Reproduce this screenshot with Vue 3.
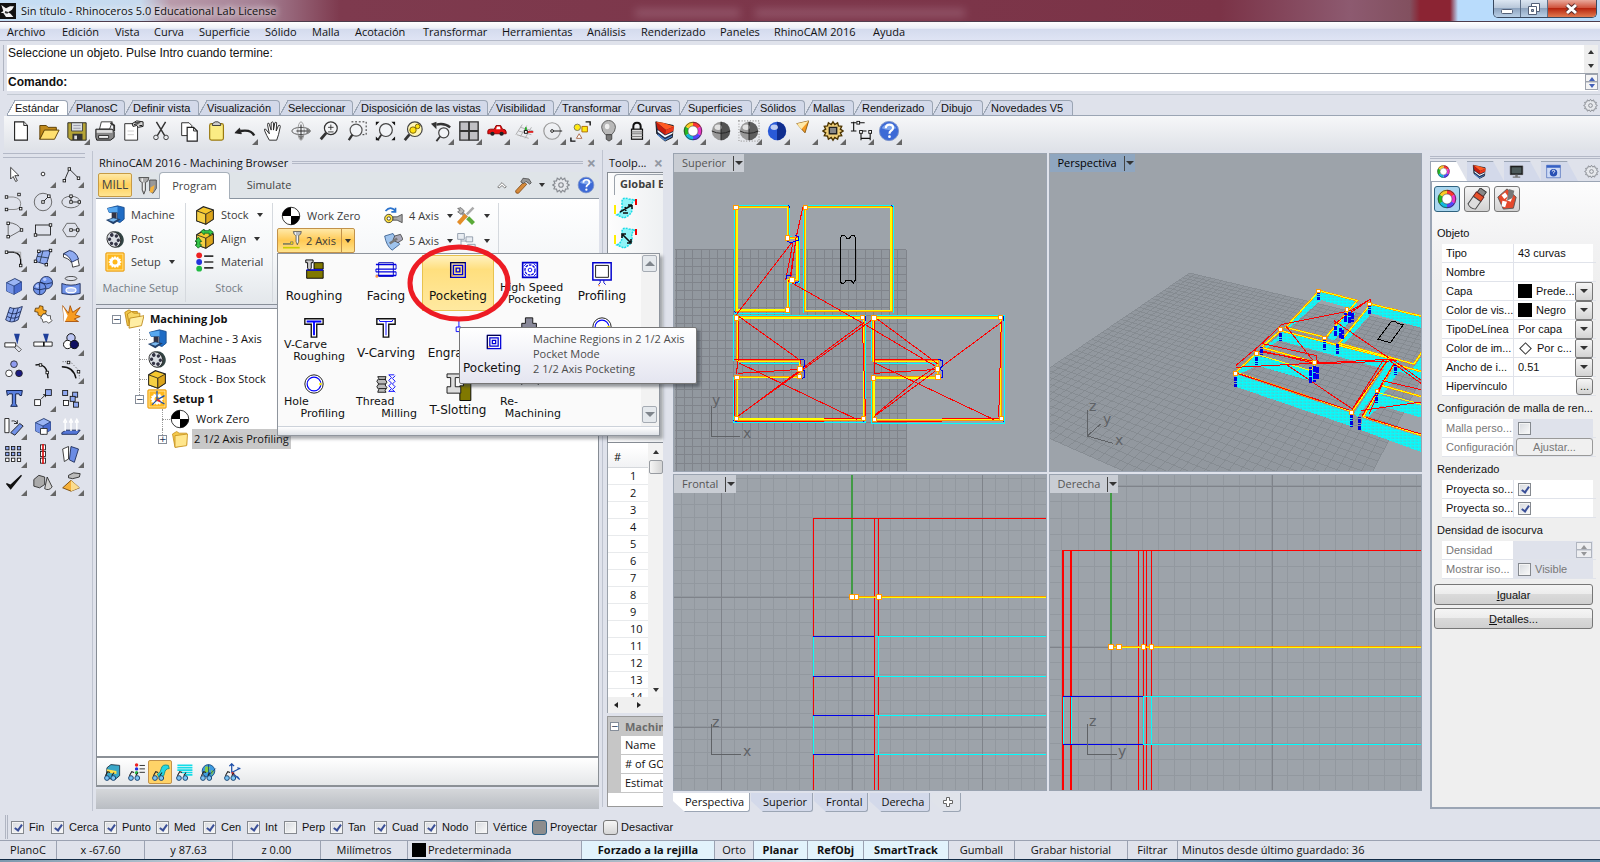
<script setup>
const menus = [
  ['Archivo', 55], ['Edición', 53], ['Vista', 39], ['Curva', 45], ['Superficie', 66], ['Sólido', 47], ['Malla', 43],
  ['Acotación', 68], ['Transformar', 79], ['Herramientas', 85], ['Análisis', 54], ['Renderizado', 79],
  ['Paneles', 54], ['RhinoCAM 2016', 99], ['Ayuda', 50]
]
const toolTabs = [
  ['Estándar', 61], ['PlanosC', 57], ['Definir vista', 74], ['Visualización', 81], ['Seleccionar', 73],
  ['Disposición de las vistas', 135], ['Visibilidad', 66], ['Transformar', 75], ['Curvas', 51], ['Superficies', 72],
  ['Sólidos', 53], ['Mallas', 49], ['Renderizado', 79], ['Dibujo', 50], ['Novedades V5', 90]
]

const lens = '<circle cx="14" cy="9" r="7" fill="#f4f5f7" stroke="#333" stroke-width="1.3"/><path d="M9 14L3 21" stroke="#333" stroke-width="3"/>'
const sphere = (c, d) => `<circle cx="12" cy="12" r="10" fill="${c}"/><path d="M12 2a10 10 0 0 1 0 20z" fill="${d}" opacity=".7"/><ellipse cx="9" cy="8" rx="4" ry="3" fill="#fff" opacity=".7"/>`
const wheel = '<g fill="none" stroke-width="5"><path d="M12 4.500A7.500 7.500 0 0 1 18.500 8.200" stroke="#f33"/><path d="M18.500 8.200A7.500 7.500 0 0 1 18.500 15.800" stroke="#e3c"/><path d="M18.500 15.800A7.500 7.500 0 0 1 12 19.500" stroke="#54f"/><path d="M12 19.500A7.500 7.500 0 0 1 5.500 15.800" stroke="#1bd"/><path d="M5.500 15.800A7.500 7.500 0 0 1 5.500 8.200" stroke="#2b2"/><path d="M5.500 8.200A7.500 7.500 0 0 1 12 4.500" stroke="#fc2"/></g><circle cx="12" cy="12" r="9.500" fill="none" stroke="#333" stroke-width=".8"/><circle cx="12" cy="12" r="5.500" fill="#fff" stroke="#555" stroke-width=".7"/>'
const layers = '<path d="M2 2l19 4-1 13-8 4-9-8z" fill="#1c2c50" stroke="#111"/><path d="M2 2l8 1 12 4-9 4z" fill="#ff5a22"/><path d="M2 2l11 9-1 5-8-6z" fill="#c81c0c"/><path d="M13 11l9-4-1 5-9 4z" fill="#f0381a"/><path d="M4 11l8 6 9-4-1 2-8 4-8-6z" fill="#fff"/><path d="M4 15l8 6 8-4v1l-8 5-8-6z" fill="#4f86cc"/>'
const doc = '<path d="M5 2h10l4 4v16H5z" fill="#fff" stroke="#222" stroke-width="1.2"/><path d="M15 2v4h4" fill="#ddd" stroke="#222"/>'
const dot = (x, y) => `<rect x="${x - 1.5}" y="${y - 1.5}" width="3" height="3" fill="#fff" stroke="#111"/>`
const gearPath = 'M12 2l2 3 3-2 1 3.500 3.500.5-1.500 3 3 2-3 2 1.500 3-3.500.500-1 3.500-3-2-2 3-2-3-3 2-1-3.500-3.500-.500 1.500-3-3-2 3-2-1.500-3L6 6.500 7 3l3 2z'
const cube = (a, b, c) => `<path d="M3 8l10-5 8 4v10l-9 5-9-4z" fill="${a}" stroke="#122a60"/><path d="M3 8l9 4v10l-9-4z" fill="${b}"/><path d="M12 12l9-5v10l-9 5z" fill="${c}"/><path d="M3 8l9 4 9-5M12 12v10" fill="none" stroke="#122a60" stroke-width=".8"/>`
const blue = (d) => `<path d="${d}" fill="#8eaaf0" stroke="#14234f"/>`
const square = (x, y, f = '#fff', s = 5) => `<rect x="${x}" y="${y}" width="${s}" height="${s}" fill="${f}" stroke="#111"/>`
const film = '<g transform="rotate(-25 12 12)"><ellipse cx="13" cy="13" rx="9" ry="10" fill="#344"/><ellipse cx="10.500" cy="12" rx="8" ry="9.500" fill="#d9dde2" stroke="#222"/><g fill="#334"><circle cx="10.500" cy="6" r="2.200"/><circle cx="15" cy="9.500" r="2"/><circle cx="15" cy="15" r="2"/><circle cx="10.500" cy="18" r="2.200"/><circle cx="6" cy="9.500" r="2"/><circle cx="6" cy="15" r="2"/></g></g>'
const zero = '<circle cx="12" cy="12" r="10.500" fill="#fff" stroke="#111"/><path d="M12 12V1.500A10.500 10.500 0 0 0 1.500 12zM12 12v10.500a10.500 10.500 0 0 0 10.500-10.500z" fill="#000"/>'
const machine = '<path d="M3 4l12-3 8 2v14l-5 4-3-1V9H5z" fill="#1f6cc4" stroke="#174a8a"/><path d="M3 4l12-2v7H5z" fill="#57a8f0"/><path d="M8 9h6v6l-3 3-3-3z" fill="#334"/><path d="M1 18l9-3 9 2-9 6z" fill="#22406c"/><path d="M4 18l6-2 5 1-5 3z" fill="#7ab8ee"/>'
const stock = '<path d="M2 7l8-5 12 4v11l-9 6-11-4z" fill="#f6c82e" stroke="#222" stroke-width="1.300"/><path d="M2 7l11 4v12l-11-4z" fill="#f6d044" stroke="#222"/><path d="M13 11l9-5v11l-9 6z" fill="#dda51a" stroke="#222"/>'
const setup = `<rect x="1" y="1" width="22" height="22" rx="1" fill="#ffb81c" stroke="#e69300"/><rect x="2.500" y="2.500" width="19" height="19" fill="none" stroke="#ffe6a0"/><g transform="translate(3 3) scale(.75)"><path d="${gearPath}" fill="#fff"/><circle cx="12" cy="12" r="4" fill="#ffb81c"/></g>`
const material = '<g stroke="#333" stroke-width="2"><path d="M11 5h11M11 12h11M11 19h11"/></g><circle cx="5" cy="4" r="3.500" fill="#e22"/><circle cx="5" cy="12" r="3.500" fill="#23d"/><circle cx="5" cy="20" r="3.500" fill="#2b4"/>'
const folder = '<path d="M3 6l5-3 3 2h9v14l-14 3z" fill="#f3c84b" stroke="#c89320"/><path d="M6 8l15-2-1 14-14 2z" fill="#ffe68c" stroke="#c89320"/>'
const folders = '<path d="M1 4l5-3 3 2h7v15l-12 2z" fill="#f3c84b" stroke="#b98414"/><path d="M4 6l5-3 3 2h7v14l-12 3z" fill="#f8d768" stroke="#b98414"/><path d="M6 23l1-12 17-3-3 12z" fill="#ffeea4" stroke="#b98414"/>'
const help = '<circle cx="12" cy="12" r="10.500" fill="#3d6ad6" stroke="#7c93c8"/><path d="M4 9a9 8 0 0 1 16 0q-8 4-16 0z" fill="#8fb4f4" opacity=".8"/><path d="M8.500 9q0-4 4-4t4 3.500q0 2-2.500 3.500-1.500 1-1.500 3" fill="none" stroke="#fff" stroke-width="2.300"/><circle cx="12.500" cy="18.200" r="1.500" fill="#fff"/>'
const glasses = '<g fill="#7bc4f4" stroke="#16406e" stroke-width="1.200"><circle cx="5" cy="19" r="3"/><circle cx="13" cy="19" r="3"/></g><path d="M3 16l3-5 3 1M11 16l3-4" fill="none" stroke="#222" stroke-width="1.300"/>'
const mill = '<path d="M8 2h12l-1 4-3 2v9l-2 5-2-5V8L9 6z" fill="#b7bcc2" stroke="#444"/><path d="M11 3v4M14 8v11" stroke="#fff" stroke-width="1.500"/>'

const I = {
  new: doc,
  open: '<path d="M2 6h7l2 2h9v4H7l-5 9z" fill="#c08a1c" stroke="#5a3c00"/><path d="M2 21l5-10h16l-5 10z" fill="#ffe070" stroke="#5a3c00"/>',
  save: '<path d="M2 3h20v19H5l-3-3z" fill="#b5a436" stroke="#222"/><path d="M6 3h12v9H6z" fill="#d9dde2" stroke="#444"/><path d="M8 6h8M8 9h8" stroke="#99a"/><path d="M7 15h11v7H7z" fill="#333"/><path d="M9 17h3v4H9z" fill="#ddd"/>',
  print: '<path d="M8 2h12l-3 8H6z" fill="#fff" stroke="#333"/><path d="M2 10h18l2 3v6l-4 3H3l-1-3z" fill="#888" stroke="#111"/><path d="M3 11h17v3H3z" fill="#ddd"/><path d="M5 17h11v3H5z" fill="#fff" stroke="#222"/><path d="M18 3l4 3v6" stroke="#333" fill="none" stroke-width="2"/>',
  props: '<path d="M3 4h11l3 3v15H3z" fill="#fff" stroke="#222"/><path d="M11 4l5-3 7 1v5l-5 1-2-2-4 1z" fill="#d6d6d6" stroke="#111"/><path d="M13 5l5-1M14 3l6 0M19 6l3 0" stroke="#111"/><path d="M6 12h7M6 16h7" stroke="#ccc"/>',
  cut: '<path d="M7 2l9 15M17 2L8 17" stroke="#333" stroke-width="1.600"/><circle cx="6.500" cy="19" r="2.500" fill="none" stroke="#333"/><circle cx="17.500" cy="19" r="2.500" fill="none" stroke="#333"/>',
  copy: '<path d="M4 3h8l3 3v11H4z" fill="#fff" stroke="#222"/><path d="M10 8h7l4 4v11H10z" fill="#fff" stroke="#222" stroke-width="1.300"/><path d="M17 8v4h4" fill="none" stroke="#222"/>',
  paste: '<rect x="4" y="4" width="15" height="18" rx="2" fill="#fbec84" stroke="#9a7a10" stroke-width="1.300"/><path d="M7 6V4l3-2h3l3 2v2z" fill="#ccc" stroke="#333"/>',
  undo: '<path d="M22 17q-3-7-15-5" fill="none" stroke="#222" stroke-width="2.600"/><path d="M1 14l5-5 2 6z" fill="#222" stroke="#222"/>',
  hand: '<path d="M8 22q-3-5-5-10-1-3 1-2l4 5-2-10q0-2 1.500-1.500L10 11V3q1-2 2.500 0v8l1.500-8q1.500-1.500 2 0l-.5 9 2.500-6q2-1 2 1l-2 9-2 6z" fill="#fff" stroke="#222"/>',
  rotate: '<ellipse cx="12" cy="12" rx="10" ry="4" fill="none" stroke="#555"/><ellipse cx="12" cy="12" rx="3.500" ry="10" fill="none" stroke="#999"/><path d="M12 5v12M7 12h12" stroke="#222"/><path d="M18 9l5 3-5 3zM9 17h6l-3 5z" fill="#777"/>',
  zoom: lens + '<path d="M11 8h6M14 5v6M11 13h6" stroke="#333"/>',
  zoomwin: '<path d="M6 2h16v14h-8" fill="none" stroke="#222" stroke-dasharray="2 2"/><circle cx="11" cy="11" r="6.500" fill="#f2f4f7" stroke="#555" stroke-width="1.300"/><path d="M7 16l-4 6" stroke="#333" stroke-width="2.500"/>',
  zoomext: '<circle cx="13" cy="11" r="7" fill="#f2f4f7" stroke="#444" stroke-width="1.300"/><path d="M8 16l-4 6" stroke="#333" stroke-width="2"/><path d="M2 6V2h4zM19 2h4v4zM23 18v4h-4zM2 18v4h4z" fill="#111"/>',
  zoomsel: '<circle cx="14" cy="10" r="8" fill="#fff6b8" stroke="#444" stroke-width="1.300"/><circle cx="12" cy="11" r="3.500" fill="#ffe112" stroke="#776000"/><circle cx="17" cy="7" r="2.500" fill="#ffe112" stroke="#776000"/><path d="M8 16l-5 6" stroke="#333" stroke-width="3"/>',
  undoview: '<path d="M22 8q-6-5-15-3" fill="none" stroke="#333" stroke-width="2.600"/><path d="M1 4l6-2 0 8z" fill="#333"/><circle cx="15" cy="14" r="5.500" fill="#f2f4f7" stroke="#444" stroke-width="1.300"/><path d="M11 18l-4 5" stroke="#333" stroke-width="2"/>',
  fourview: '<path d="M2 2h20v20H2z" fill="#c0c0c4" stroke="#333" stroke-width="1.500"/><path d="M12 2v20M2 12h20" stroke="#333" stroke-width="2"/>',
  car: '<path d="M2 12q0-2 3-2h4l2-4h5l2 4q4 0 4 3v2H2z" fill="#e81010" stroke="#800"/><path d="M12 7h3l1 3h-5z" fill="#fff"/><circle cx="7" cy="15" r="2.300" fill="#222"/><circle cx="17" cy="15" r="2.300" fill="#222"/>',
  cplane: '<path d="M2 16L9 5M7 18L14 6M12 20l7-12M7 8l14 4M5 12l14 4M3 16l13 4" stroke="#aaa" stroke-width="1"/><path d="M13 13h8" stroke="#d22" stroke-width="2"/><path d="M13 13V8" stroke="#2a2" stroke-width="2"/>' + dot(13, 13),
  circle: '<circle cx="11" cy="12" r="9" fill="none" stroke="#999" stroke-width="1.300"/><path d="M11 12h11" stroke="#111"/><circle cx="11" cy="12" r="1.500" fill="#fff" stroke="#111"/>',
  select: '<path d="M17 2h5v4M6 23H1v-4" fill="none" stroke="#111" stroke-width="1.500"/><circle cx="8" cy="8" r="3.500" fill="#ffe912" stroke="#775"/><path d="M13 7h6v6h-6z" fill="#ffe912" stroke="#a60"/><path d="M7 20l3-5 3 5z" fill="#fff" stroke="#a64"/>',
  bulb: '<path d="M8 16q-4-4-4-8a7 7 0 0 1 15 0q0 4-4 8z" fill="#b8b8b8" stroke="#555"/><path d="M9 16h6v5l-3 2-3-2z" fill="#777" stroke="#444"/><ellipse cx="10" cy="7" rx="2.500" ry="3" fill="#eee"/>',
  lock: '<path d="M8 11V7q0-4 4-4t4 4v4" fill="none" stroke="#111" stroke-width="2.200"/><rect x="6" y="10" width="12" height="11" fill="#ddd" stroke="#111" stroke-width="1.300"/><path d="M6 13h12M6 15h12M6 18h12" stroke="#777"/>',
  layers, wheel,
  sphere: sphere('#999', '#333') + '<path d="M2 12q10 5 20 0M12 2v20" fill="none" stroke="#222"/>',
  ghost: '<rect x="1" y="1" width="22" height="22" fill="none" stroke="#aaa" stroke-width="2" stroke-dasharray="1 2"/>' + sphere('#999', '#444') + '<path d="M2 12q10 5 20 0M12 2v20" fill="none" stroke="#222"/>',
  render: sphere('#2a5ad8', '#061b70'),
  light: '<path d="M3 4l13-3-4 13z" fill="#f59a20" stroke="#8a5a10"/><path d="M3 4l13-3-8 9z" fill="#ffe9a8"/>',
  gear: `<path d="${gearPath}" fill="#f0cf78" stroke="#4a3300" stroke-width="1.500"/><path d="M8 8h8v7H8z" fill="#888" stroke="#222" stroke-width="1.500"/>`,
  dim: '<path d="M4 2v10M1 3h6M1 12h6M9 3h7M12 12v10M12 12h6M12 20h10M22 12v10" stroke="#111" fill="none" stroke-width="1.200"/>' + dot(9, 3) + dot(12, 13) + dot(22, 13),
  help,
  outlineGear: `<path d="${gearPath}" fill="#e6e8ec" stroke="#868a90" stroke-width="1.500"/><circle cx="12" cy="12" r="3" fill="none" stroke="#868a90" stroke-width="1.500"/>`,
  // side tools
  pointer: '<path d="M8 4v14l3-3 3 6 2-1-3-6h5z" fill="#fff" stroke="#222"/>',
  point: '<circle cx="12" cy="12" r="2.200" fill="#fff" stroke="#111"/>',
  polyline: '<path d="M4 20L10 6l11 11" fill="none" stroke="#111"/>' + dot(4, 20) + dot(10, 6) + dot(21, 17),
  curve: '<path d="M3 6h8q9 1 9 8t-8 7H3" fill="none" stroke="#777"/>' + dot(3, 6) + dot(18, 3) + dot(3, 21) + dot(20, 20),
  circ: '<circle cx="12" cy="12" r="10.500" fill="none" stroke="#555"/><path d="M12 12l6-6" stroke="#111"/>' + dot(12, 12) + dot(19, 5),
  ellipse: '<ellipse cx="12" cy="12" rx="11" ry="7" fill="none" stroke="#555"/><path d="M12 5v7h10" stroke="#111" fill="none"/>' + dot(12, 5) + dot(12, 12) + dot(22, 12),
  arc: '<path d="M5 3v18l16-9M5 3q12 1 16 9" fill="none" stroke="#555"/>' + dot(5, 4) + dot(5, 20) + dot(21, 12),
  rect: '<rect x="3" y="6" width="18" height="12" fill="none" stroke="#111"/>' + dot(3, 18) + dot(21, 6),
  polygon: '<path d="M7 4h10l5 8-5 8H7l-5-8z" fill="none" stroke="#555"/><path d="M12 12h9" stroke="#111"/>' + dot(12, 12) + dot(20, 12),
  fillet: '<path d="M3 5h8q9 1 9 10v6" fill="none" stroke="#111" stroke-width="1.600"/><path d="M12 5h8v8" fill="none" stroke="#999"/>' + dot(3, 5) + dot(20, 21),
  surfpts: blue('M7 4l14-1-5 17-13-4z') + '<path d="M12 3l-4 15M5 10l14 2" stroke="#234"/>' + dot(7, 4) + dot(21, 3) + dot(16, 20) + dot(3, 16),
  surfcrv: '<path d="M3 7q10-7 17 5l2 9-8 2q0-9-11-12z" fill="#fff" stroke="#222"/>' + blue('M3 7l7-4q8 1 11 10l-8 4q-3-8-10-10z'),
  box: cube('#9ab4f4', '#7795e6', '#4a6cd0'),
  spheres: '<g fill="#6f92e8" stroke="#14234f"><circle cx="16" cy="8" r="7.500"/><circle cx="8" cy="15" r="7.500"/></g><path d="M1 15q7 3 14 0M8 8v14M9 8q7 3 14 0" fill="none" stroke="#14234f"/><circle cx="5" cy="12" r="2" fill="#b8cbff"/><circle cx="14" cy="4" r="2" fill="#b8cbff"/>',
  cylinder: '<ellipse cx="12" cy="3" rx="7" ry="2.500" fill="none" stroke="#333"/><path d="M1 9q11 4 22 0v12q-11 3-22 0z" fill="#6f92e8" stroke="#14234f"/><ellipse cx="12" cy="17" rx="6" ry="3" fill="#b8c9f8" stroke="#fff" stroke-width="1.500"/>',
  meshsurf: blue('M7 4q5 3 15-1l-5 16q-8 5-15 0z') + '<path d="M12 5L7 21M17 5l-5 16M5 10q7 4 15-1M4 15q7 4 14 0" stroke="#14234f" fill="none"/>',
  puzzle: '<path d="M3 5l4 0 1-3 4 1 0 4 4 1-1 4-3 0-2 3-4-2 0-3-4-1z" fill="#f5a623" stroke="#5a3500"/><path d="M12 12l4 0 1 2 4 0v4l2 2-4 3-3-2-4 1-1-4-2-1z" fill="#fff" stroke="#444"/>',
  explode: '<path d="M2 2l7 9 2-9 3 8 9-6-6 9 6 2-7 3 5 3H4z" fill="#f79b22" stroke="#a44a00"/><path d="M2 2l6 12-4 9z" fill="#fff"/>',
  trim: '<path d="M12 2h7l-3 13z" fill="#1f3f9a"/><path d="M1 13h13v5H1z" fill="#fff" stroke="#111"/><path d="M14 15l7 6-3 3-6-6" fill="none" stroke="#555"/>',
  split: '<path d="M12 2h7l-3 12z" fill="#1f3f9a"/><path d="M1 12h22v5H1z" fill="#fff" stroke="#111"/><path d="M13 12v5" stroke="#111" stroke-width="2"/>',
  group: '<g stroke="#111" stroke-width="1.200"><circle cx="12" cy="7" r="5" fill="#bcc6f4"/><circle cx="8" cy="15" r="5" fill="#fff"/><circle cx="16" cy="15" r="5" fill="#101060"/></g>',
  ungroup: '<g stroke="#222"><circle cx="12" cy="5" r="4" fill="#8f9cf0"/><circle cx="6" cy="16" r="4" fill="#fff"/><circle cx="18" cy="16" r="4" fill="#1a1a80"/></g>',
  pts: '<path d="M3 6q14-3 15 16" fill="none" stroke="#111" stroke-width="1.700"/>' + dot(9, 6) + dot(17, 15),
  editpts: '<path d="M2 2h9l11 11v9" fill="none" stroke="#333" stroke-dasharray="1 2"/><path d="M1 8q14 0 17 14" fill="none" stroke="#111" stroke-width="1.800"/>' + dot(9, 3) + dot(21, 14),
  text: '<path d="M3 3h19l-1 6h-2l-1-2h-4v12l2 3H8l2-3V7H6L4 9z" fill="#5a80e0" stroke="#14234f" stroke-width="1.200"/>',
  move: square(2, 14, '#fff', 7) + square(15, 2, '#8fa8f0', 7) + '<path d="M10 13l5-5M12 8h3v3" stroke="#111" fill="none"/>',
  array: square(2, 3, '#8fa8f0', 6) + square(14, 5, '#8fa8f0', 6) + square(11, 10, '#8fa8f0', 6) + square(3, 15, '#fff', 6) + square(15, 17, '#8fa8f0', 6),
  rotate2: '<path d="M1 3h5v17H1z" fill="#fff" stroke="#111"/><path d="M9 6q5-1 7 3M16 5v4h-4" fill="none" stroke="#111"/><path d="M8 20L19 9l4 3-10 11z" fill="#7292e8" stroke="#111"/>',
  solid: cube('#9ab4f4', '#7795e6', '#4a6cd0') + '<path d="M9 15h8v7H9z" fill="#fff" stroke="#222"/>',
  arrows: '<path d="M1 20l5-3h17l-4 5H1z" fill="#5577d8" stroke="#14234f"/><path d="M5 18V7M12 18V7M19 18V7M3 8l2-4 2 4M10 8l2-4 2 4M17 8l2-4 2 4" stroke="#fff" stroke-width="1.700" fill="none"/>',
  gridsq: [3, 10, 17].map(y => [2, 9, 16].map(x => square(x, y, y > 14 ? '#fff' : '#8fa8f0', 4)).join('')).join(''),
  align: square(9, 1, '#fff', 6) + square(9, 9, '#fff', 6) + square(9, 17, '#fff', 6) + '<path d="M12 0v24" stroke="#d11" stroke-width="2"/>',
  flip: '<path d="M2 6l7-3v15l-5 3z" fill="#fff" stroke="#222"/><path d="M12 3l9 3-5 16-6-3z" fill="#6b8ce4" stroke="#14234f"/>',
  check: '<path d="M3 14l5 6L21 4 8 16z" fill="#111" stroke="#111" stroke-width="1.500"/>',
  shapes: '<path d="M1 9l6-5 7 2v9l-6 4-7-2z" fill="#aaa" stroke="#222"/><path d="M17 6l6 12q-4 5-9 2z" fill="#d0d0d0" stroke="#222"/>',
  pyramid: '<path d="M12 10l10 9-10 4-10-4z" fill="#f6b13a" stroke="#6b3c00"/><path d="M12 10v13l10-4z" fill="#fbdc8e"/><path d="M9 4l6-3 8 1-1 4-8 2-5-1z" fill="#bbb" stroke="#222"/>',
  // machining browser
  machine, film, setup, stock, material, zero, folder, folders, mill,
  millpair: '<path d="M1 3h12l-1 4-3 2v9l-2 5-2-5V9L2 7z" fill="#aaa" stroke="#444"/><path d="M5 4v4M7 9v10" stroke="#fff" stroke-width="1.500"/><path d="M14 6h8v10l-4 6-4-3z" fill="#999" stroke="#444"/><path d="M15 15l5-3-2 9h-4z" fill="#f6b23a"/>',
  alignStock: stock + '<path d="M7 3l4-3v2h6V0l5 4-5 4V5h-6v2zM4 10l4 5H6v4h2l-4 4-4-4h2v-4H0z" fill="#37c84a" stroke="#116622"/>',
  hammer: '<path d="M2 20L13 8l4 3L6 23q-4 1-4-3z" fill="#d68a3a" stroke="#7a4310"/><path d="M12 3l8 1 3 5-2 2-5-4-3 3-4-2z" fill="#999" stroke="#444"/>',
  fourax: '<circle cx="7" cy="15" r="5" fill="#ffe23c" stroke="#333"/><circle cx="7" cy="15" r="2" fill="#fff" stroke="#333"/><path d="M3 6q6-7 12 0M15 2v5h-5" fill="none" stroke="#2a72cc" stroke-width="2"/><path d="M12 13l5 0 6-3v10l-6-3h-5z" fill="#aaa" stroke="#444"/>',
  fiveax: '<path d="M2 6l10-3 8 13-9 7q-7-5-9-17z" fill="#9fc4ee" stroke="#345a8a"/><path d="M14 6l7-2 3 6-6 4-6-3z" fill="#aab" stroke="#444"/><path d="M8 15l9-6" stroke="#777" stroke-width="3"/>',
  tools: '<path d="M7 8l6 6" stroke="#999" stroke-width="4"/><path d="M2 3l4-1 4 4-4 4-4-3 3-2z" fill="#bbb" stroke="#666"/><path d="M12 11L3 21" stroke="#e48d28" stroke-width="5"/><path d="M21 2l-8 8" stroke="#aaa" stroke-width="3"/><path d="M14 14l7 7" stroke="#5aaa38" stroke-width="5"/>',
  tree: '<g fill="#e9edf2" stroke="#8794a3"><path d="M2 3h8v7H2zM12 7h8v6h-8zM14 16h9v6h-9z"/><path d="M6 10v9h8M6 12h6" fill="none"/></g>',
  multi: '<path d="M0 15h9v-2h3v3H0z" fill="#ffe100" stroke="#776"/><path d="M0 20h20" stroke="#cc0" stroke-width="2"/><g transform="translate(6 -1) scale(.8)">' + mill + '</g>',
  setup1: setup + '<path d="M12 2v11l9 5M12 13l9-5M12 13l-6 6" stroke="#1c4ea8" stroke-width="1.500" fill="none"/><path d="M12 13l4 2" stroke="#e22" stroke-width="2"/>',
  path1: '<path d="M3 18Q9 15 8 7T15 2L21 3Q17 5 18 11T10 21z" fill="#8ff4f8" stroke="#19dbe6" stroke-width="1.500" stroke-dasharray="2 1"/><path d="M6 15L18 8M18 8h-4M18 8v4M12 14l-1-4M9 16h5" stroke="#111" stroke-width="1.500" fill="none"/><path d="M1 17V8" stroke="#fe0" stroke-width="2"/><path d="M22 2v6" stroke="#e00" stroke-width="2"/>',
  path2: '<path d="M3 18Q9 15 8 7T15 2L21 3Q17 5 18 11T10 21z" fill="#8ff4f8" stroke="#19dbe6" stroke-width="1.500" stroke-dasharray="2 1"/><path d="M9 8l7 7M8 11V7h4M13 16h4v-4" stroke="#111" stroke-width="1.600" fill="none"/><path d="M1 17V8" stroke="#fe0" stroke-width="2"/><path d="M22 2v6" stroke="#e00" stroke-width="2"/>',
  v1: '<path d="M5 6l5-4 11 1v13l-6 5-11-2z" fill="#3aa7c8" stroke="#123"/><path d="M5 8l12 2v4L5 12z" fill="#ffe04a"/>' + glasses,
  v2: '<g transform="translate(9 0) scale(.62)">' + material + '</g>' + glasses,
  v3: '<path d="M8 14q4-1 5-7t9-4l1 4q-5 0-6 6t-7 5z" fill="#25d7e4" stroke="#088"/>' + glasses,
  v4: '<path d="M3 3h19M3 6h19M3 9h19M8 12h14M12 15h10" stroke="#13dce8" stroke-width="2"/>' + glasses,
  v5: '<circle cx="12" cy="10" r="8" fill="#3d9be0" stroke="#147"/><path d="M8 4l6 1-2 6-5 2zM15 9l4 1-3 6z" fill="#8c4"/><path d="M12 2v14l9-9" stroke="#147" fill="none"/>' + glasses,
  v6: '<path d="M11 12V1M8 4l3-3 3 3M11 12l10-5M11 12l9 8M18 17l3 4M18 6l4 1" fill="none" stroke="#1c4ea8" stroke-width="1.600"/><path d="M11 12l3 2" stroke="#e22" stroke-width="2"/>' + glasses,
  // gallery
  gRough: '<path d="M12 4h10v7H12zM4 12h18v9H4z" fill="#807800" stroke="#000"/><path d="M4 12h18" stroke="#00f" stroke-width="1.500"/><path d="M3 1h8v3H9v6l-2 2-2-2V4H3z" fill="#ccc" stroke="#000"/>',
  gFace: '<path d="M4 4h16v15H4z" fill="none" stroke="#0000b0"/><path d="M1 6h22M1 11h22M1 14h22M1 18h22" stroke="#0000e0" stroke-width="1.400"/><path d="M23 6v5M1 11v3M23 14v4" stroke="#0000e0"/><circle cx="2" cy="19" r="1.500" fill="#f94"/>',
  gPocket: '<path d="M4 4h16v16H4zM7 7h10v10H7zM10 10h4v4h-4z" fill="none" stroke="#0000d8" stroke-width="1.500"/><path d="M4 20V4h16" fill="none" stroke="#001" stroke-width="1"/><circle cx="6" cy="18" r="1" fill="#f94"/>',
  gSpeed: '<path d="M4 4h16v16H4z" fill="#fff" stroke="#00c" stroke-width="1.800"/><circle cx="12" cy="12" r="5.500" fill="none" stroke="#11d" stroke-width="1.500" stroke-dasharray="3 1"/><circle cx="12" cy="12" r="2" fill="none" stroke="#00f"/><path d="M5 8l3-3M16 5l3 3M5 16l3 3M16 19l3-3" stroke="#00f"/>',
  gProfile: '<path d="M2 4h20v19H2z" fill="#fff" stroke="#00c" stroke-width="1.600"/><path d="M5 7h14v13H5z" fill="none" stroke="#111"/><path d="M10 23v3l-2 2M14 23v3l2 2" stroke="#00c" fill="none"/><circle cx="9" cy="29" r="1" fill="#f94"/>',
  gT: '<path d="M2 3h20v6h-7v14H9V9H2z" fill="#fff" stroke="#111" stroke-width="1.500"/><path d="M4 6h16M12 7v14" stroke="#00f" stroke-width="2"/>',
  gT2: '<path d="M2 3h20v6h-7v14H9V9H2z" fill="#fff" stroke="#111" stroke-width="1.500"/><path d="M5 6h14M12 6v15M4 4l2 2M20 4l-2 2" stroke="#00f"/>',
  gEngrave: '<path d="M13 2v10M10 12h5v5h-5z" stroke="#00f" fill="none"/>',
  gChamfer: '<path d="M7 2h8v6h4v5H3V8h4z" fill="#889" stroke="#111"/>',
  gHoleP: '<circle cx="12" cy="12" r="10" fill="#fff" stroke="#111"/><circle cx="12" cy="12" r="7.500" fill="none" stroke="#00f" stroke-width="1.300"/><circle cx="19" cy="12" r="1.500" fill="#fe0"/>',
  gThread: '<path d="M3 4h9l-1 3 2 3-2 3 2 3-2 3 1 2H3l1-3-2-3 2-3-2-3 2-3z" fill="#bbb" stroke="#111"/><path d="M4 7h8M4 12h8M4 17h8" stroke="#111"/><path d="M21 2h-6l3 3-3 3 3 3-3 3 3 3-3 3h6M22 3l-3 3 3 3-3 3 3 3-3 3 3 3" stroke="#00f" fill="none"/>',
  gSlot: '<path d="M14 14h4v-6h8v22H14z" fill="#807800" stroke="#000"/><path d="M0 1h14v4H9v10h6v7H0v-7h4V5H0z" fill="#ddd" stroke="#111"/>',
  gRe: '<path d="M8 1v4l-5 6M16 1v4l5 6M3 11v2M21 11v2" stroke="#111" fill="none"/><path d="M10 1h6" stroke="#00f" stroke-width="2"/>',
  tube: '<g transform="rotate(35 12 12)"><path d="M8 0h8v6H8z" fill="#888" stroke="#333"/><path d="M7 6h10v6H7z" fill="#e8512a" stroke="#622"/><path d="M7 12h10v10q-5 3-10 0z" fill="#ddd" stroke="#444"/></g>',
  texture: '<path d="M2 10L12 1l10 9-3 12-11 1z" fill="#e5492c" stroke="#555"/><path d="M6 8l4-3 3 4-4 3zM14 8l4 2-2 5-5-2zM7 14l5 1-2 6-4-1z" fill="#fff"/><path d="M14 1l6 2-2 8-6 3z" fill="#777"/>',
  monitor: '<path d="M2 3h20v14H2z" fill="#111" stroke="#444"/><path d="M4 5h16v10H4z" fill="#4d5a5a"/><path d="M10 17h4v3h4v2H6v-2h4z" fill="#777"/>',
  helpdoc: '<path d="M1 2h22v20H1z" fill="#cddaf5" stroke="#3b5fb4"/><path d="M1 2h22v4H1z" fill="#3661c4"/><circle cx="12" cy="14" r="6" fill="#274fb4"/><path d="M10 12q0-2 2-2t2 2q0 1-2 2v1" stroke="#fff" stroke-width="1.500" fill="none"/>',
  rhino: '<rect width="24" height="24" fill="#111"/><path d="M2 3l7 5 6-3 6 0-3 5-6 4 4 2 4 5H9l-4-6H1l4-3z" fill="#f2f2f2"/><path d="M8 12l5 2-2 2-4-1z" fill="#333"/>'
}

const topTools = [
  ['new'], ['open'], ['save', 1], ['print'], ['props'], ['cut'], ['copy'], ['paste'], ['undo', 1], ['hand'], ['rotate'],
  ['zoom'], ['zoomwin'], ['zoomext'], ['zoomsel'], ['undoview', 1], ['fourview', 1], ['car', 1], ['cplane', 1],
  ['circle', 1], ['select', 1], ['bulb', 1], ['lock', 1], ['layers', 1], ['wheel', 1], ['sphere'], ['ghost', 1],
  ['render', 1], ['light', 1], ['gear', 1], ['dim', 1], ['help', 1]
]
const sideTools = [
  ['pointer'], ['point', 1], ['polyline', 1], ['curve', 1], ['circ', 1], ['ellipse', 1], ['arc', 1], ['rect', 1], ['polygon', 1],
  ['fillet', 1], ['surfpts', 1], ['surfcrv', 1], ['box', 1], ['spheres', 1], ['cylinder', 1], ['meshsurf', 1], ['puzzle'], ['explode'],
  ['trim'], ['split'], ['group', 1], ['ungroup'], ['pts'], ['editpts', 1], ['text'], ['move', 1], ['array'],
  ['rotate2', 1], ['solid', 1], ['arrows', 1], ['gridsq', 1], ['align', 1], ['flip', 1], ['check', 1], ['shapes', 1], ['pyramid', 1]
]
const gallery = [
  ['gRough', 'Roughing'], ['gFace', 'Facing'], ['gPocket', 'Pocketing'], ['gSpeed', 'High Speed', 'Pocketing'], ['gProfile', 'Profiling'],
  ['gT', 'V-Carve', 'Roughing'], ['gT2', 'V-Carving'], ['gEngrave', 'Engraving'], ['gChamfer', 'Chamfering'], ['gHoleP', 'Hole', 'Pocketing'],
  ['gHoleP', 'Hole', 'Profiling'], ['gThread', 'Thread', 'Milling'], ['gSlot', 'T-Slotting'], ['gRe', 'Re-', 'Machining']
]
const snaps = [
  ['Fin', 40, 1], ['Cerca', 53, 1], ['Punto', 52, 1], ['Med', 47, 1], ['Cen', 44, 1], ['Int', 37, 1], ['Perp', 46, 0],
  ['Tan', 44, 1], ['Cuad', 50, 1], ['Nodo', 51, 1], ['Vértice', 57, 0]
]
const status = [
  ['PlanoC', 57], ['x -67.60', 88], ['y 87.63', 88], ['z 0.00', 88], ['Milímetros', 87], ['Predeterminada', 174, 'layer'],
  ['Forzado a la rejilla', 133, 'on'], ['Orto', 39], ['Planar', 54, 'on'], ['RefObj', 56, 'on'], ['SmartTrack', 85, 'on'],
  ['Gumball', 66], ['Grabar historial', 113], ['Filtrar', 50]
]
const props = [
  { t: 'Objeto' },
  { l: 'Tipo', v: '43 curvas' }, { l: 'Nombre', input: 1 },
  { l: 'Capa', v: 'Prede...', sel: 1, sw: 'black' }, { l: 'Color de vis...', v: 'Negro', sel: 1, sw: 'black' },
  { l: 'TipoDeLínea', v: 'Por capa', sel: 1 }, { l: 'Color de im...', v: 'Por c...', sel: 1, sw: 'diamond' },
  { l: 'Ancho de i...', v: '0.51', sel: 1 }, { l: 'Hipervínculo', more: 1 },
  { t: 'Configuración de malla de ren...' },
  { l: 'Malla perso...', chk: 1, off: 1 }, { l: 'Configuración', btn: 'Ajustar...', off: 1 },
  { t: 'Renderizado' },
  { l: 'Proyecta so...', chk: 1, on: 1 }, { l: 'Proyecta so...', chk: 1, on: 1 },
  { t: 'Densidad de isocurva' },
  { l: 'Densidad', spin: 1, off: 1 }, { l: 'Mostrar iso...', chk: 1, txt: 'Visible', off: 1 }
]

const steps = (a, b, s) => { const r = []; for (let v = a; v <= b; v += s) r.push(Math.round(v / 3) * 3); return r }
const vlines = (xs, y1, y2) => xs.map(x => `M${x} ${y1}V${y2}`).join('')
const hlines = (ys, x1, x2) => ys.map(y => `M${x1} ${y}H${x2}`).join('')
const gridTop = vlines(steps(18, 707, 24.6), 298, 962) + hlines(steps(298, 963, 24.6), 12, 706)
const gridFront = vlines(steps(235, 2400, 39.15), 100, 1700) + hlines(steps(145, 1700, 39.1), 200, 2400)
const gridRight = vlines(steps(16, 2400, 48.35), 0, 1700) + hlines(steps(46, 1700, 48.3), 0, 2400)

// projective map of the unit square onto the ground plane's four corners
const P = [[447, 367], [1213, 550], [855, 1229], [-162, 780]]
const dx1 = P[1][0] - P[2][0], dx2 = P[3][0] - P[2][0], sx = P[0][0] - P[1][0] + P[2][0] - P[3][0]
const dy1 = P[1][1] - P[2][1], dy2 = P[3][1] - P[2][1], sy = P[0][1] - P[1][1] + P[2][1] - P[3][1]
const den = dx1 * dy2 - dx2 * dy1
const g = (sx * dy2 - dx2 * sy) / den, h = (dx1 * sy - sx * dy1) / den
const project = (u, v) => {
  const w = g * u + h * v + 1
  const x = ((P[1][0] - P[0][0] + g * P[1][0]) * u + (P[3][0] - P[0][0] + h * P[3][0]) * v + P[0][0]) / w
  const y = ((P[1][1] - P[0][1] + g * P[1][1]) * u + (P[3][1] - P[0][1] + h * P[3][1]) * v + P[0][1]) / w
  return x.toFixed(1) + ' ' + y.toFixed(1)
}
let gridPersp = ''
for (let i = 0; i <= 40; i++) {
  const t = i / 40
  gridPersp += `M${project(t, 0)}L${project(t, 1)}M${project(0, t)}L${project(1, t)}`
}
const posts = [[833, 425, 24], [718, 540, 30], [646, 612, 32], [583, 672, 38], [932, 790, 38], [956, 798, 40], [986, 464, 26], [1063, 642, 30], [1008, 725, 34], [850, 566, 36], [889, 580, 30], [662, 588, 24]]
const crowded = [[915, 488, 30], [925, 484, 34], [935, 486, 28], [885, 526, 30], [898, 532, 30], [906, 538, 26], [810, 650, 50], [820, 645, 50], [829, 648, 38]]
const nodesTop = [[196, 170], [350, 262], [350, 478], [404, 170], [197, 502], [575, 500], [388, 655], [387, 678], [199, 680], [198, 804], [579, 804], [610, 502], [990, 500], [801, 655], [802, 679], [609, 682], [612, 806], [992, 804], [364, 388]]
</script>

<template>
  <div class="app">
    <header class="title">
      <svg class="i16" viewBox="0 0 24 24" v-html="I.rhino" />
      <h1>Sin título - Rhinoceros 5.0 Educational Lab License</h1>
      <span class="blur b1"></span><span class="blur b2"></span>
      <div class="winbtns">
        <button aria-label="Minimizar"><svg width="14" height="12"><rect x="1.500" y="6.500" width="11" height="4" rx="1" fill="#fff" stroke="#536078" /></svg></button>
        <button aria-label="Restaurar"><svg width="14" height="14"><path d="M4.500 1.500h8v8h-8z" fill="#fff" stroke="#536078" /><path d="M1.500 4.500h8v8h-8z" fill="#fff" stroke="#536078" /><path d="M4.500 7.500h2v2h-2z" fill="#9ab" stroke="#536078" /></svg></button>
        <button class="close" aria-label="Cerrar"><svg width="14" height="12"><path d="M2 2l9 8M11 2l-9 8" stroke="#5b3030" stroke-width="5" /><path d="M2 2l9 8M11 2l-9 8" stroke="#fff" stroke-width="3" /></svg></button>
      </div>
    </header>
    <nav class="menu"><a v-for="m in menus" :key="m[0]" href="#" :style="{ width: m[1] + 'px' }">{{ m[0] }}</a></nav>

    <section class="cmd">
      <div class="hist"><p>Seleccione un objeto. Pulse Intro cuando termine:</p><span class="sb"><i class="up"></i><i class="dn"></i></span></div>
      <div class="prompt"><label for="cmd">Comando:</label><input id="cmd" type="text"><span class="spin"><i class="up"></i><i class="dn"></i></span></div>
    </section>

    <section class="tabsrow">
      <button v-for="(t, i) in toolTabs" :key="t[0]" :class="['ttab', { active: !i }]" :style="{ width: t[1] + 'px' }">{{ t[0] }}</button>
      <svg class="cog" viewBox="0 0 24 24" v-html="I.outlineGear" />
    </section>
    <section class="toolbar">
      <button v-for="t in topTools" :key="t[0]" :class="['tool', { more: t[1] }]" :aria-label="t[0]"><svg viewBox="0 0 24 24" v-html="I[t[0]]" /></button>
    </section>

    <main class="work">
      <aside class="side">
        <button v-for="t in sideTools" :key="t[0]" :class="['tool', { more: t[1] }]" :aria-label="t[0]"><svg viewBox="0 0 24 24" v-html="I[t[0]]" /></button>
      </aside>

      <section class="browser">
        <div class="phead"><span>RhinoCAM 2016 - Machining Browser</span><i class="grip"></i><b>×</b></div>
        <div class="rtabs">
          <button class="mill">MILL</button>
          <svg class="i20" viewBox="0 0 24 24" v-html="I.millpair" />
          <button class="rtab on">Program</button><button class="rtab">Simulate</button>
          <span class="rright">
            <svg width="10" height="9" viewBox="0 0 14 12"><path d="M1 8l6-6 6 6-2 1.500-4-3.500-4 3.500z" fill="#fff" stroke="#555" /></svg>
            <svg class="i18" viewBox="0 0 24 24" v-html="I.hammer" /><i class="dn"></i>
            <svg class="i18" viewBox="0 0 24 24" v-html="I.outlineGear" /><svg class="i18" viewBox="0 0 24 24" v-html="I.help" />
          </span>
        </div>
        <div class="ribbon">
          <div class="grp g1">
            <button><svg viewBox="0 0 24 24" v-html="I.machine" />Machine</button>
            <button><svg viewBox="0 0 24 24" v-html="I.film" />Post</button>
            <button><svg viewBox="0 0 24 24" v-html="I.setup" />Setup<i class="dn"></i></button>
            <em>Machine Setup</em>
          </div>
          <div class="grp g2">
            <button><svg viewBox="0 0 24 24" v-html="I.stock" />Stock<i class="dn"></i></button>
            <button><svg viewBox="0 0 24 24" v-html="I.alignStock" />Align<i class="dn"></i></button>
            <button><svg viewBox="0 0 24 24" v-html="I.material" />Material</button>
            <em>Stock</em>
          </div>
          <div class="grp g3">
            <button><svg viewBox="0 0 24 24" v-html="I.zero" />Work Zero</button>
            <button class="axis2"><svg viewBox="0 0 24 24" v-html="I.multi" />2 Axis<span><i class="dn"></i></span></button>
          </div>
          <div class="grp g4">
            <button><svg viewBox="0 0 24 24" v-html="I.fourax" />4 Axis<i class="dn"></i></button>
            <button><svg viewBox="0 0 24 24" v-html="I.fiveax" />5 Axis<i class="dn"></i></button>
          </div>
          <div class="grp g5">
            <button><svg viewBox="0 0 24 24" v-html="I.tools" /><i class="dn"></i></button>
            <button><svg viewBox="0 0 24 24" v-html="I.tree" /><i class="dn"></i></button>
          </div>
        </div>
        <div class="treebox">
          <ul class="tree">
            <li>
              <div class="row"><button class="ex">−</button><svg viewBox="0 0 24 24" v-html="I.folders" /><b>Machining Job</b></div>
              <ul>
                <li><div class="row leaf"><svg viewBox="0 0 24 24" v-html="I.machine" /><span>Machine - 3 Axis</span></div></li>
                <li><div class="row leaf"><svg viewBox="0 0 24 24" v-html="I.film" /><span>Post - Haas</span></div></li>
                <li><div class="row leaf"><svg viewBox="0 0 24 24" v-html="I.stock" /><span>Stock - Box Stock</span></div></li>
                <li>
                  <div class="row"><button class="ex">−</button><svg viewBox="0 0 24 24" v-html="I.setup1" /><b>Setup 1</b></div>
                  <ul>
                    <li><div class="row leaf"><svg viewBox="0 0 24 24" v-html="I.zero" /><span class="near">Work Zero</span></div></li>
                    <li><div class="row"><button class="ex">+</button><svg viewBox="0 0 24 24" v-html="I.folder" /><span class="hl">2 1/2 Axis Profiling</span></div></li>
                  </ul>
                </li>
              </ul>
            </li>
          </ul>
        </div>
        <div class="vbar">
          <button v-for="n in 6" :key="n" :class="{ on: n === 3 }" :aria-label="'Vista ' + n"><svg viewBox="0 0 24 24" v-html="I['v' + n]" /></button>
        </div>
        <div class="gbar"></div>

        <div class="gallery">
          <div class="cells">
            <button v-for="(c, i) in gallery" :key="i" :class="{ hot: i === 2, two: c[2] }">
              <svg viewBox="0 0 24 24" v-html="I[c[0]]" />
              <span>{{ c[1] }}</span><span v-if="c[2]" class="r">{{ c[2] }}</span>
            </button>
          </div>
          <div class="gscroll"><button aria-label="Subir"><i class="up"></i></button><button aria-label="Bajar"><i class="dn"></i></button></div>
          <div class="gfoot"></div>
        </div>
        <div class="tip">
          <figure><svg viewBox="0 0 24 24" v-html="I.gPocket" /><figcaption>Pocketing</figcaption></figure>
          <p>Machine Regions in 2 1/2 Axis<br>Pocket Mode<br>2 1/2 Axis Pocketing</p>
        </div>
        <svg class="ring" width="104" height="80"><ellipse cx="52" cy="40" rx="49" ry="36" fill="none" stroke="#ed1c24" stroke-width="5" /></svg>
      </section>

      <section class="tpath">
        <div class="phead"><span>Toolp...</span><b>×</b></div>
        <div class="tbox">
          <h2>Global E</h2>
          <svg class="i24" viewBox="0 0 24 24" v-html="I.path1" /><svg class="i24" viewBox="0 0 24 24" v-html="I.path2" />
        </div>
        <div class="nums">
          <table><thead><tr><th>#</th></tr></thead><tbody><tr v-for="n in 14" :key="n"><td>{{ n }}</td></tr></tbody></table>
          <div class="vs"><i class="up"></i><span></span><i class="dn"></i></div>
          <div class="hs"><i class="lf"></i><i class="rt"></i></div>
        </div>
        <div class="info"><h3><button class="ex">−</button>Machin</h3><p>Name</p><p># of GO</p><p>Estimat</p></div>
      </section>

      <section class="views">
        <div class="vp">
          <svg shape-rendering="crispEdges">
            <g transform="scale(.33333333) translate(-10 -10)" fill="none" stroke-width="3">
              <path d="M12 298H706V962H12z" fill="#92989f" stroke="none" /><path :d="gridTop" stroke="#80848b" />
              <path d="M190 484V163H357V258L387 262V396L357 398V487H190M397 487V163H668V487M188 493H585V814H188V680H385V672M188 493V630M203 637H392M603 493H1000V817H603V680H798V672M603 493V630M612 637H805" stroke="#0ff" />
              <g stroke="#f90" stroke-width="6"><path d="M197 168H352V262H381V388H352V480H197zM402 168H664V481H402zM198 630V499H580V807H198V678H388V630zM608 630V499H992V808H608V680H802V630z" /></g>
              <path d="M199 171H350V264H379V386H350V478H199zM404 171H661V479H404zM200 633V502H578V805H200V680H386V633zM610 633V502H990V806H610V682H800V633z" stroke="#ff0" stroke-width="4" />
              <path d="M397 168L376 262 358 385M367 275L345 388M376 262L360 385M364 275L197 492 390 630M352 390L580 520 800 650M198 800L580 515M202 796L608 505M205 637L560 807M202 668L388 656M610 498L802 640M610 798L992 515M612 794L735 690 800 645M612 637L970 807M612 668L800 656M202 500V630L197 670M192 680V800M190 625H390V640M612 625H805M575 520L585 800M612 500V670M992 510L984 800M198 813H460M460 804H580M612 813H815M815 803H990" stroke="red" />
              <path d="M189 170L196 163M352 163L358 170M662 163L668 170M396 170L402 163M189 480L196 487M346 262V270L360 277 384 268V258L374 254M347 385V374H362M372 398L386 392M388 625L400 628V648L392 655 402 660V680L390 685M803 625L814 630V648L806 655 815 660V680L803 685M583 495V510M583 805L578 814M188 808L198 814M603 500V510M998 495V510M998 800V815" stroke="#0000e8" />
              <g v-for="(n, i) in nodesTop" :key="i"><rect :x="n[0] - 8" :y="n[1] - 8" width="16" height="16" fill="#f90" /><rect :x="n[0] - 5" :y="n[1] - 5" width="10" height="10" fill="#fff" /></g>
              <path d="M508 262L514 255H523L528 262H537L543 254H550L553 260V390L548 397 540 388H527L520 397H512L508 392z" stroke="#000" />
              <path d="M121 767V856H209" stroke="#5f6266" />
            </g>
            <text x="38" y="251">y</text><text x="69" y="284">x</text>
          </svg>
          <button class="vlabel">Superior<span><i class="dn"></i></span></button>
        </div>
        <div class="vp">
          <svg shape-rendering="crispEdges">
            <defs><pattern id="wall" width="12" height="9" patternUnits="userSpaceOnUse"><rect width="12" height="9" fill="#0ff" /><rect x="0" y="6" width="3" height="3" fill="#8f9aa2" /><rect x="6" y="6" width="3" height="3" fill="#6fbcc4" /><rect x="9" y="3" width="3" height="3" fill="#54cdd4" /></pattern></defs>
            <g transform="scale(.33333333) translate(-28 -10)" fill="none" stroke-width="3">
              <path d="M447 367L1213 550 855 1229-162 780z" fill="#92989f" /><path :d="gridPersp" stroke="#80858c" stroke-width="2" />
              <g fill="url(#wall)"><path d="M836 420L950 450V480L842 448 745 533 730 530zM722 542L1050 625 1040 658 725 572zM990 460L1240 520V560L992 488 912 578 893 576zM585 670L935 788V828L585 708zM940 788L1050 625H1080L950 800zM645 614L825 662 815 692 650 645 600 668 588 660zM668 592L722 550V565L680 592 665 600zM965 803L1240 890V940L960 838zM1025 735L1240 790V830L1020 765 985 798 970 795 1062 650 1240 690V730L1075 662zM860 562L925 480 945 490 880 570zM1123 645L1240 480V640L1143 680 1100 668z" /></g>
              <g stroke="#f90" stroke-width="6"><path d="M836 420L950 450 855 560 735 530zM990 460L1240 520M990 460L895 578 1120 640 1240 460M720 540L1045 622 935 783 585 665 645 610M720 540L662 590 828 636M1060 640L1240 690M1060 640L968 798 1240 885M1025 705L1240 765" /></g>
              <path d="M836 420L950 450 855 560 735 530zM990 460L1240 520M990 460L895 578 1120 640 1240 460M720 540L1045 622 935 783 585 665 645 610 810 660 828 636M720 540L662 590 828 636M1060 640L1240 690M1060 640L968 798 1240 885M1025 705L1240 765M1010 725L1240 788" stroke="#ff0" />
              <path d="M720 522L930 480 990 445 988 465M735 525L825 640M990 445L880 520 930 485M880 510L1045 622M585 650L1060 625M585 645L662 580 725 520M640 600L840 635M662 578L828 615 830 640M735 640L935 775 1040 630M590 668L925 778M662 600L830 640 1070 630M720 525L662 580M938 770L1030 625M960 780L1240 740M965 795L1060 640M1060 630L1240 760M1025 690L1240 740M1040 625L1240 770M975 800L1240 880M1025 700L985 790" stroke="red" />
              <g stroke="#00d" stroke-width="9" stroke-dasharray="5 2"><path v-for="(p, i) in posts" :key="i" :d="`M${p[0]} ${p[1]}v${p[2]}`" /></g>
              <g stroke="#00e" stroke-width="9" stroke-dasharray="6 1"><path v-for="(p, i) in crowded" :key="i" :d="`M${p[0]} ${p[1]}v${p[2]}`" /></g>
              <g fill="#fff" stroke="#f90"><path v-for="(p, i) in [...posts.slice(0, 5), posts[6], posts[8], posts[9], [918, 480], [820, 640]]" :key="i" :d="`M${p[0] - 5} ${p[1] - 10}h11v11h-11z`" /></g>
              <path d="M1052 512L1066 514 1072 519 1088 522 1050 575 1035 573 1028 570 1012 566z" stroke="#000" />
              <path d="M140 778V856L217 878M140 856L180 820" stroke="#5f6266" />
            </g>
            <text x="39" y="257">z</text><text x="53" y="270">y</text><text x="65" y="291">x</text>
          </svg>
          <button class="vlabel cur">Perspectiva<span><i class="dn"></i></span></button>
        </div>
        <div class="vp">
          <svg shape-rendering="crispEdges">
            <g transform="scale(.33333333) translate(-250 -133)" fill="none" stroke-width="3">
              <path :d="gridFront" stroke="#92989f" /><path d="M391 100V1700M784 499V1700M1175 100V1700M200 499H784M200 889H2400" stroke="#7f838a" />
              <path d="M783 100V499" stroke="#429a45" stroke-width="6" />
              <path d="M667 1700V262H2400M850 262V1700M862 262V1700" stroke="red" />
              <path d="M784 499H2400" stroke="#f90" stroke-width="6" /><path d="M784 499H2400" stroke="#ff0" />
              <path d="M850 616H2400M850 736H2400M850 853H2400M850 970H2400M667 616V736M862 616V736M667 853V970M862 853V970" stroke="#0ff" />
              <path d="M850 600V1000" stroke="red" /><path d="M667 616H850M667 736H850M667 853H850M667 970H850" stroke="#0000e8" />
              <path d="M776 491h14v14h-14zM792 491h10v14h-10zM856 491h15v14h-15z" fill="#fff" stroke="#f90" />
              <path d="M361 880V970H450" stroke="#5f6266" />
            </g>
            <text x="38" y="252">z</text><text x="69" y="281">x</text>
          </svg>
          <button class="vlabel">Frontal<span><i class="dn"></i></span></button>
        </div>
        <div class="vp">
          <svg shape-rendering="crispEdges">
            <g transform="scale(.33333333) translate(-28 -13)" fill="none" stroke-width="3">
              <path :d="gridRight" stroke="#92989f" /><path d="M211 529V1700M694 0V1700M0 46H2400M0 529H211" stroke="#7f838a" />
              <path d="M210 0V529" stroke="#429a45" stroke-width="6" />
              <path d="M66 239H2400M292 239V1700M307 239V1700M316 239V1700M331 239V1700" stroke="red" />
              <path d="M66 239V1700M90 239V1700" stroke="red" stroke-width="6" />
              <path d="M211 528H2400" stroke="#f90" stroke-width="6" /><path d="M211 529H2400" stroke="#ff0" />
              <path d="M307 676H2400M307 820H2400M67 676V820M91 676V820M307 676V820M331 676V820" stroke="#0ff" />
              <path d="M66 676H307M66 820H307" stroke="#0000e8" />
              <path d="M203 521h14v14h-14zM227 521h14v14h-14zM302 521h12v14h-12zM325 521h14v14h-14z" fill="#fff" stroke="#f90" />
              <path d="M140 760V850H228" stroke="#5f6266" />
            </g>
            <text x="39" y="251">z</text><text x="68" y="281">y</text>
          </svg>
          <button class="vlabel">Derecha<span><i class="dn"></i></span></button>
        </div>
        <div class="vtabs">
          <button class="on">Perspectiva</button><button>Superior</button><button>Frontal</button><button>Derecha</button>
          <button class="plus" aria-label="Nueva vista"><svg width="10" height="10"><path d="M3.500.5h3v3h3v3h-3v3h-3v-3h-3v-3h3z" fill="#fff" stroke="#666" /></svg></button>
        </div>
      </section>

      <aside class="props">
        <div class="ptabs">
          <button class="on" aria-label="Propiedades"><svg viewBox="0 0 24 24" v-html="I.wheel" /></button>
          <button aria-label="Capas"><svg viewBox="0 0 24 24" v-html="I.layers" /></button>
          <button aria-label="Visualización"><svg viewBox="0 0 24 24" v-html="I.monitor" /></button>
          <button aria-label="Ayuda"><svg viewBox="0 0 24 24" v-html="I.helpdoc" /></button>
          <svg class="cog" viewBox="0 0 24 24" v-html="I.outlineGear" />
        </div>
        <div class="pbody">
          <div class="pbtns">
            <button class="on" aria-label="Objeto"><svg viewBox="0 0 24 24" v-html="I.wheel" /></button>
            <button aria-label="Material"><svg viewBox="0 0 24 24" v-html="I.tube" /></button>
            <button aria-label="Textura"><svg viewBox="0 0 24 24" v-html="I.texture" /></button>
          </div>
          <div class="plist">
            <template v-for="(p, i) in props" :key="i">
              <h4 v-if="p.t">{{ p.t }}</h4>
              <div v-else :class="['prow', { off: p.off }]">
                <label :for="'p' + i">{{ p.l }}</label>
                <div class="val">
                  <template v-if="p.sel"><i v-if="p.sw" :class="['sw', p.sw]"></i><select :id="'p' + i"><option>{{ p.v }}</option></select><span class="dd"><i class="dn"></i></span></template>
                  <input v-else-if="p.input" :id="'p' + i" type="text">
                  <button v-else-if="p.more" :id="'p' + i" class="dots">...</button>
                  <input v-else-if="p.chk" :id="'p' + i" type="checkbox" :checked="!!p.on" :disabled="!!p.off">
                  <button v-else-if="p.btn" :id="'p' + i" class="adj" disabled>{{ p.btn }}</button>
                  <template v-else-if="p.spin"><input :id="'p' + i" type="text" disabled><span class="spin"><i class="up"></i><i class="dn"></i></span></template>
                  <output v-else :id="'p' + i">{{ p.v }}</output>
                  <span v-if="p.txt" class="ptxt">{{ p.txt }}</span>
                </div>
              </div>
            </template>
            <button class="wide"><u>I</u>gualar</button><button class="wide"><u>D</u>etalles...</button>
          </div>
        </div>
      </aside>
    </main>

    <section class="snaps">
      <label v-for="s in snaps" :key="s[0]" :style="{ width: s[1] + 'px' }"><input type="checkbox" :checked="!!s[2]">{{ s[0] }}</label>
      <button class="proj"><i class="dark"></i>Proyectar</button><button><i></i>Desactivar</button>
    </section>
    <footer class="status">
      <button v-for="s in status" :key="s[0]" :class="s[2]" :style="{ width: s[1] + 'px' }">{{ s[0] }}</button>
      <p>Minutos desde último guardado: 36</p>
    </footer>
    <div class="desk"></div>
  </div>
</template>

<style>
body { margin: 0; background: #dfe2ea; }
</style>

<style scoped>
* { box-sizing: border-box; }
.app { display: flex; flex-direction: column; height: 100vh; min-height: 862px; background: #dfe2eb; font: 11px/16px "Open Sans", "Noto Sans", sans-serif; color: #111; overflow: hidden; }
button { font: inherit; color: inherit; background: none; border: 0; padding: 0; margin: 0; }
h1, h2, h3, h4, p, ul, figure { margin: 0; padding: 0; font-size: inherit; list-style: none; }
svg { display: block; flex: none; }
i.up, i.dn, i.lf, i.rt { display: block; width: 0; height: 0; border: 3px solid transparent; flex: none; }
i.dn { border-top: 4px solid #333; border-bottom: 0; }
i.up { border-bottom: 4px solid #333; border-top: 0; }
i.lf { border-right: 4px solid #222; border-left: 0; }
i.rt { border-left: 4px solid #222; border-right: 0; }
.i16 { width: 16px; height: 16px; } .i18 { width: 18px; height: 18px; } .i20 { width: 20px; height: 20px; } .i24 { width: 24px; height: 24px; }

.title { position: relative; display: flex; align-items: center; height: 22px; flex: none; border-bottom: 1px solid #4c3b4c; background: linear-gradient(90deg, #c4def5 0, #c7daee 140px, #b99bab 170px, #a58094 260px, #7e3a4e 340px, #7b3347 calc(100% - 380px), #8d5a70 calc(100% - 250px), #82505f calc(100% - 190px), #8b2433 calc(100% - 180px), #8b2433 calc(100% - 150px), #b9dcfc calc(100% - 142px), #b9dcfc 100%); }
.title h1 { font-weight: 400; margin-left: 5px; text-shadow: 0 0 6px #fff, 0 0 8px #fff; }
.blur { position: absolute; top: 9px; height: 8px; background: #a9768a; opacity: .5; filter: blur(4px); }
.b1 { left: 635px; width: 105px; } .b2 { left: 755px; width: 210px; }
.winbtns { position: absolute; right: 3px; top: 0; display: flex; height: 18px; border: 1px solid #38485f; border-top: 0; border-radius: 0 0 5px 5px; overflow: hidden; }
.winbtns button { width: 27px; display: grid; place-items: center; background: linear-gradient(#dce6f2, #b9c8da 45%, #8ea4bf 50%, #b9cfe6); border-right: 1px solid #5d6f88; }
.winbtns .close { width: 48px; border: 0; background: linear-gradient(#e9a99b, #d0543d 45%, #b7260f 50%, #e17a50); }

.menu { display: flex; height: 19px; flex: none; padding-left: 7px; background: linear-gradient(#fff, #eceff7 35%, #d4dbee 40%, #dfe4f4); border-bottom: 1px solid #b4b9c8; }
.menu a { color: #111; text-decoration: none; line-height: 19px; white-space: nowrap; font-size: 11px; }

.cmd { margin: 4px 2px 0 3px; padding-left: 3px; border-left: 1px solid #b0b5c2; flex: none; font: 12px/16px "Liberation Sans", Arial, sans-serif; }
.hist { display: flex; justify-content: space-between; height: 28px; background: #fff; padding-left: 1px; }
.sb { display: flex; flex-direction: column; justify-content: space-between; align-items: center; width: 14px; padding: 5px 0; background: #eee; }
.prompt { display: flex; align-items: center; height: 18px; padding-bottom: 1px; border-top: 1px solid #9aa1ab; background: #fff; padding-left: 1px; font-weight: 700; }
.prompt label { font-size: 12px; }
.prompt input { flex: 1; border: 0; outline: 0; background: none; height: 16px; }
.spin { display: flex; flex-direction: column; justify-content: space-around; align-items: center; width: 13px; height: 16px; border: 1px solid #9da2ad; background: linear-gradient(#f4f4f4 44%, #9da2ad 45%, #9da2ad 53%, #f4f4f4 54%); }
.spin i.up { border-bottom-color: #4460b8; } .spin i.dn { border-top-color: #4460b8; }

.tabsrow { position: relative; display: flex; align-items: flex-end; height: 22px; flex: none; margin: 3px 0 0 7px; border-bottom: 1px solid #9ba5b4; border-top: 1px solid #c3c9d2; font: 11px/14px "Liberation Sans", Arial, sans-serif; }
.ttab { position: relative; height: 15px; padding-left: 8px; text-align: left; white-space: nowrap; background: #d3d9e9; border-top: 1px solid #9ba5b4; border-right: 1px solid #9ba5b4; border-radius: 0 4px 0 0; }
.ttab::before { content: ""; position: absolute; left: 0; top: -1px; width: 8px; height: 15px; background: linear-gradient(119deg, #dfe2eb 46%, #9ba5b4 47%, #9ba5b4 54%, transparent 55%); }
.ttab.active { background: #fff; }
.cog { position: absolute; right: 2px; top: 3px; width: 15px; height: 15px; }
.toolbar { display: flex; height: 34px; flex: none; align-items: center; padding: 0 0 5px 5px; background: linear-gradient(#f6f7f9, #dfe2e8); border-left: 4px solid #dfe2eb; }
.tool { position: relative; width: 28px; height: 28px; display: grid; place-items: center; flex: none; }
.toolbar .tool { margin-left: -2px; margin-right: 2px; }
.tool svg { width: 22px; height: 22px; }
.tool.more::after { content: ""; position: absolute; right: 1px; bottom: 0; border: 3px solid; border-color: transparent #666 #666 transparent; }

.work { flex: 1; display: flex; min-height: 0; }
.side { width: 93px; flex: none; display: grid; grid-template-columns: 29px 28px 28px; grid-template-rows: 2px; grid-auto-rows: 28px; align-content: start; padding: 7px 0 0 0; margin: 1px 0 4px; border-right: 1px solid #bfc4d0; }
.side::before { content: ""; grid-column: 1 / -1; height: 3px; margin: -5px 0 0 3px; border: solid #b3b8c6; border-width: 1px 0; }
.side .tool svg { width: 20px; height: 20px; }

.browser { position: relative; width: 503px; margin-left: 3px; flex: none; display: flex; flex-direction: column; }
.phead { display: flex; align-items: center; height: 22px; padding: 3px 3px 0; gap: 4px; }
.phead b { margin-left: auto; color: #9298a3; font-size: 16px; line-height: 12px; }
.grip { flex: 1; height: 3px; border: solid #b3b8c6; border-width: 1px 0; }
.rtabs { display: flex; align-items: center; height: 27px; padding-left: 2px; background: #dfe4e8; border-bottom: 1px solid #8a94a0; color: #444; }
.mill { width: 34px; height: 24px; margin-right: 6px; font-size: 12px; background: linear-gradient(#ffe9a6, #ffcf5c 50%, #ffe591); border: 1px solid #c79b45; border-radius: 2px; }
.rtab { width: 78px; height: 26px; }
.rtab.on { width: 71px; margin-left: 1px; background: #fff; border: 1px solid #a7b0ba; border-bottom: 0; border-radius: 4px 4px 0 0; height: 28px; margin-bottom: -1px; }
.rright { display: flex; align-items: center; gap: 7px; margin-left: auto; padding-right: 4px; }
.ribbon { display: flex; height: 106px; padding-top: 4px; background: linear-gradient(#fff, #f4f6f8 60%, #e3e7eb); border-bottom: 1px solid #888f99; color: #3b3b3b; }
.grp { display: flex; flex-direction: column; height: 99px; border-right: 1px solid #d5d9de; }
.grp button { display: flex; align-items: center; height: 25px; gap: 6px; white-space: nowrap; font-size: 11px; }
.grp svg { width: 20px; height: 20px; }
.grp i.dn { margin-left: 2px; }
.grp em { font-style: normal; text-align: center; line-height: 28px; color: #737b85; font-size: 11px; }
.g1 { width: 90px; padding-left: 9px; } .g1 em { margin-left: -9px; }
.g2 { width: 87px; padding-left: 9px; } .g2 em { margin-left: -9px; }
.g3 { width: 110px; padding-left: 4px; border: 0; } .g3 button:first-child { padding-left: 4px; }
.g3 .axis2 { width: 78px; padding-left: 5px; gap: 3px; background: linear-gradient(#ffe9a8, #ffc954 50%, #ffe38d); border: 1px solid #c2924a; border-radius: 2px; }
.axis2 span { margin-left: auto; width: 13px; height: 23px; border-left: 1px solid #c2924a; display: grid; place-items: center; }
.axis2 span i.dn { margin: 0; }
.g4 { width: 73px; border: 0; } .g5 { width: 43px; }
.treebox { flex: 1; min-height: 0; margin-top: 3px; background: #fff; border: 1px solid #868c94; border-bottom: 2px solid #8b9096; }
.tree .row { display: flex; align-items: center; height: 20px; white-space: nowrap; }
.tree .row svg { width: 20px; height: 20px; margin-left: 3px; }
.tree b { margin-left: 6px; font-size: 11px; }
.tree span { margin-left: 12px; font-size: 11px; } .tree .near { margin-left: 6px; }
.tree .hl { margin-left: 2px; background: #c8c8c8; padding: 2px; }
.tree > li { padding-left: 15px; }
.tree ul { padding-left: 23px; }
.tree ul li { position: relative; }
.tree ul li::before { content: ""; position: absolute; left: 4px; top: 0; height: 20px; border-left: 1px dotted #999; }
.tree ul li:last-child::before { height: 10px; }
.tree .leaf { padding-left: 9px; }
.tree .leaf::before { content: ""; position: absolute; left: 4px; top: 10px; width: 8px; border-top: 1px dotted #999; }
.ex { position: relative; z-index: 1; width: 9px; height: 9px; border: 1px solid #868e9a; background: #fff; font: 9px/7px "DejaVu Sans", sans-serif; color: #235; }
.vbar { display: flex; height: 29px; padding: 2px 3px; background: linear-gradient(#fff, #e5e7e9); border: 1px solid #8b9096; border-width: 0 1px 2px; flex: none; }
.vbar button { width: 24px; height: 24px; display: grid; place-items: center; }
.vbar svg { width: 19px; height: 19px; }
.vbar .on { background: #ffd368; border: 1px solid #c2924a; border-radius: 2px; }
.gbar { height: 20px; margin: 2px 0 6px; flex: none; background: linear-gradient(#d5d7da, #b9bdc3); }

.gallery { position: absolute; left: 181px; top: 103px; width: 383px; z-index: 3; display: grid; grid-template-columns: 1fr 18px; background: #fafafa; border: 1px solid #8f959d; box-shadow: 3px 3px 3px rgba(70, 75, 85, .45); }
.cells { display: grid; grid-template-columns: repeat(5, 72px); grid-auto-rows: 57px; padding: 1px 0 0; }
.cells button { display: flex; flex-direction: column; align-items: center; padding: 4px 0 0; font: 12px/12px "DejaVu Sans", Verdana, sans-serif; color: #111; white-space: nowrap; }
.cells svg { width: 22px; height: 22px; margin-bottom: 9px; overflow: visible; }
.cells .two svg { margin-bottom: 1px; }
.cells .two span { align-self: flex-start; margin-left: 6px; font-size: 11px; }
.cells .two .r { align-self: flex-end; margin: 0 5px 0 0; }
.cells .hot { background: linear-gradient(#fff1bf, #ffdf7e 25%, #ffe9a0); border: 1px solid #e8c34f; margin: 0 0 1px 0; padding-top: 3px; }
.gscroll { display: flex; flex-direction: column; justify-content: space-between; background: #f2f2f2; padding: 1px 1px 3px; }
.gscroll button { width: 15px; height: 17px; border: 1px solid #a5abb3; border-radius: 2px; display: grid; place-items: center; background: #e5e9ed; }
.gfoot { grid-column: 1 / -1; height: 9px; background: linear-gradient(#fff, #dfe3e8); border-top: 1px solid #ccd2da; }
.gscroll i.up { border-width: 0 5px 5px; border-bottom-color: #7f858c; } .gscroll i.dn { border-width: 5px 5px 0; border-top-color: #7f858c; }
.tip { position: absolute; z-index: 4; left: 363px; top: 177px; width: 238px; height: 57px; display: flex; background: linear-gradient(#fff, #e4e5f0); border: 1px solid #767676; border-radius: 2px; box-shadow: 3px 3px 3px rgba(50, 55, 65, .5); color: #4c4c4c; }
.tip figure { width: 67px; margin-left: 3px; color: #111; font: 12px/16px "DejaVu Sans", Verdana, sans-serif; }
.tip svg { width: 20px; height: 20px; margin: 4px 0 8px 21px; }
.tip p { line-height: 15px; padding: 3px 0 0 3px; white-space: nowrap; font-size: 11px; }
.ring { position: absolute; z-index: 5; left: 311px; top: 93px; }

.tpath { width: 61px; margin-left: 3px; padding-left: 4px; border-left: 1px solid #bfc4d0; margin-bottom: 8px; flex: none; display: flex; flex-direction: column; overflow: hidden; }
.tpath .phead { padding: 3px 0 0 2px; gap: 2px; flex: none; }
.tbox { height: 271px; flex: none; border: 1px solid #868c94; border-right: 0; background: linear-gradient(90deg, #fdfdfd, #eef0f2); padding: 1px 0 0 6px; }
.tbox h2 { height: 21px; border: 1px solid #9ba2ab; border-right: 0; border-bottom: 0; border-radius: 4px 0 0 0; padding: 1px 0 0 5px; white-space: nowrap; margin-bottom: 2px; color: #404040; }
.tbox svg { margin: 2px 0 6px 0; }
.nums { flex: 1; min-height: 0; display: grid; grid-template: 1fr 16px / 40px 16px; background: #fff; border-left: 1px solid #9ba2ab; overflow: hidden; }
.nums table { border-collapse: collapse; display: block; overflow: hidden; min-height: 0; margin-top: 4px; }
.nums th { width: 37px; height: 20px; text-align: left; padding: 0 0 0 6px; font-weight: 400; border-bottom: 1px solid #d5d8dc; background: linear-gradient(#fff, #f1f2f4); }
.nums td { height: 17px; padding: 0 0 0 22px; border-bottom: 1px solid #e8eaec; line-height: 16px; width: 40px; font-size: 11px; }
.vs { display: flex; flex-direction: column; align-items: center; background: #f2f2f2; padding: 7px 0 5px; }
.vs span { width: 14px; height: 14px; margin-top: 6px; border: 1px solid #989ca2; border-radius: 2px; background: linear-gradient(90deg, #f5f5f5, #d4d4d4); }
.vs i.dn { margin-top: auto; }
.hs { grid-column: 1 / -1; background: #f0f0f0; display: flex; align-items: center; gap: 19px; padding-left: 6px; }
.info { flex: none; height: 91px; margin-top: 3px; background: #fff; border: 1px solid #999; border-right: 0; white-space: nowrap; overflow: hidden; }
.info h3 { display: flex; align-items: center; gap: 6px; height: 19px; padding-left: 2px; background: #c6c6c6; color: #6b6b6b; }
.info p { height: 19px; padding-left: 4px; border-left: 13px solid #c6c6c6; border-bottom: 1px solid #c6c6c6; line-height: 18px; }

.views { flex: 1; min-width: 0; margin-left: 10px; padding-top: 3px; display: grid; grid-template: 319px 1fr 22px / 1fr 1fr; gap: 2px; }
.vp { position: relative; background: #9da3aa; border: 1px solid #9aa3b0; overflow: hidden; }
.vp > svg { width: 100%; height: 100%; }
.vp text { font: 14px "DejaVu Sans", sans-serif; fill: #5f6266; shape-rendering: auto; }
.vlabel { position: absolute; left: 0; top: 0; height: 18px; padding-left: 8px; display: flex; align-items: center; gap: 7px; color: #555; background: #c9cdd4; font-size: 11px; }
.vlabel span { border-left: 1px solid #444; height: 15px; width: 11px; display: grid; place-items: center; }
.vlabel i.dn { border-width: 4px 4px 0; }
.vlabel.cur { background: #8fa6c0; color: #000; }
.vtabs { grid-column: 1 / -1; display: flex; }
.vtabs button { position: relative; height: 19px; padding: 0 5px 0 12px; margin-right: 1px; font-size: 11px; line-height: 18px; background: #d3d9ea; border-right: 1px solid #9ba5b4; border-bottom: 1px solid #9ba5b4; border-radius: 0 0 3px 0; clip-path: polygon(0 0, 100% 0, 100% 100%, 12px 100%, 0 8px); }
.vtabs .on { background: #fff; }
.vtabs .plus { background: #e0e3ea; width: 30px; padding-left: 12px; }

.props { width: 170px; flex: none; margin: 6px 0 6px 8px; display: flex; flex-direction: column; font: 11px/16px "Liberation Sans", Arial, sans-serif; border-top: 3px double #b3b8c6; }
.ptabs { position: relative; display: flex; height: 22px; padding-top: 2px; flex: none; }
.ptabs button { width: 37px; padding-left: 5px; background: #d3d9ea; border-top: 1px solid #9ba5b4; clip-path: polygon(0 0, 26px 0, 100% 100%, 0 100%); }
.ptabs button.on { background: #fff; border-left: 1px solid #9ba5b4; }
.ptabs button svg { width: 15px; height: 15px; }
.ptabs .cog { top: 5px; right: 1px; }
.pbody { flex: 1; background: linear-gradient(#fdfdfd, #f2f2f3 60px, #efefef 100px); border: 1px solid #9ba5b4; border-width: 1px 0 2px 2px; padding: 4px 4px 0 2px; }
.pbtns { display: flex; gap: 4px; margin-bottom: 9px; }
.pbtns button { width: 26px; height: 26px; border: 1px solid #777; border-radius: 3px; background: linear-gradient(#f5f5f5, #d2d2d2); display: grid; place-items: center; }
.pbtns .on { background: #a9d6ef; border-color: #2f627e; }
.pbtns svg { width: 22px; height: 22px; }
.plist h4 { font-weight: 400; height: 23px; line-height: 24px; padding-left: 3px; white-space: nowrap; overflow: hidden; }
.prow { display: flex; height: 19px; margin-left: 8px; border-bottom: 1px solid #e0e3ea; }
.prow label { width: 72px; background: #fff; padding-left: 4px; line-height: 19px; border-right: 1px solid #dfe2ea; white-space: nowrap; }
.val { position: relative; flex: 1; min-width: 0; display: flex; align-items: center; background: #fff; padding-left: 4px; margin-right: 3px; }
.off { color: #777; } .off .val { background: #dfe2eb; }
.val select { flex: 1; min-width: 0; appearance: none; border: 0; padding: 0; background: none; font: inherit; color: inherit; height: 18px; }
.val input[type=text] { width: 100%; border: 0; background: none; height: 17px; padding: 0; font: inherit; min-width: 0; }
.dd { width: 18px; height: 19px; border: 1px solid #777; background: linear-gradient(#f6f6f6, #d3d3d3); display: grid; place-items: center; border-radius: 2px; pointer-events: none; }
.dd i.dn { border-width: 4px 4px 0; }
.sw { width: 14px; height: 14px; margin-right: 4px; flex: none; }
.black { background: #000; }
.diamond { width: 9px; height: 9px; border: 1px solid #333; transform: rotate(45deg); margin: 0 7px 0 3px; }
.dots { margin-left: auto; width: 17px; height: 17px; line-height: 12px; border: 1px solid #777; border-radius: 3px; background: linear-gradient(#f6f6f6, #d3d3d3); }
.adj { flex: 1; height: 18px; margin-left: -2px; border: 1px solid #999; border-radius: 3px; background: #f0f0f0; color: #777; }
.ptxt { margin-left: 4px; }
.prow .spin { position: absolute; right: 1px; top: 1px; width: 16px; height: 16px; opacity: .7; }
.prow .spin i.up { border-bottom-color: #777; } .prow .spin i.dn { border-top-color: #777; }
.wide { display: block; width: calc(100% - 3px); height: 21px; margin: 5px 0 0; border: 1px solid #777; border-radius: 3px; background: linear-gradient(#f5f5f5, #ececec 48%, #dadada 50%, #d0d0d0); }
.wide + .wide { margin-top: 3px; }
input[type=checkbox] { appearance: none; position: relative; width: 13px; height: 13px; margin: 0; flex: none; border: 1px solid #85898f; background: linear-gradient(135deg, #d6d9de, #fafafa); box-shadow: inset 0 0 0 1px #f4f4f4; }
input[type=checkbox]:checked::after { content: ""; position: absolute; left: 4px; top: 1px; width: 3px; height: 6px; border: solid #3a4f98; border-width: 0 2px 2px 0; transform: rotate(35deg); }

.snaps { display: flex; align-items: center; height: 24px; margin: 0 0 1px 5px; padding-left: 3px; border-left: 3px double #b0b5c2; flex: none; font: 11px/14px "Liberation Sans", Arial, sans-serif; }
.snaps label { display: flex; align-items: center; gap: 5px; white-space: nowrap; }
.snaps button { display: flex; align-items: center; gap: 3px; margin-right: 6px; }
.snaps button i { width: 15px; height: 15px; border: 1px solid #777; border-radius: 3px; background: linear-gradient(#f6f6f6, #d6d6d6); }
.snaps .dark { background: #8d8d8d; border: 1px solid #2f6286; }
.status { display: flex; height: 20px; flex: none; border-top: 1px solid #9ba2b2; border-bottom: 1px solid #122b45; }
.status button { border-right: 1px solid #9ba2b2; white-space: nowrap; line-height: 18px; flex: none; }
.status .on { background: #e2f3fc; font-weight: 700; }
.status .layer { display: flex; align-items: center; gap: 2px; padding-left: 4px; }
.layer::before { content: ""; width: 14px; height: 14px; background: #000; }
.status p { line-height: 18px; padding-left: 4px; }
.desk { height: 2px; flex: none; background: linear-gradient(90deg, #7d99ae, #cfd8e0 16%, #8398a8 30%, #dfe6ee 50%, #5e87a6 80%); }
</style>
